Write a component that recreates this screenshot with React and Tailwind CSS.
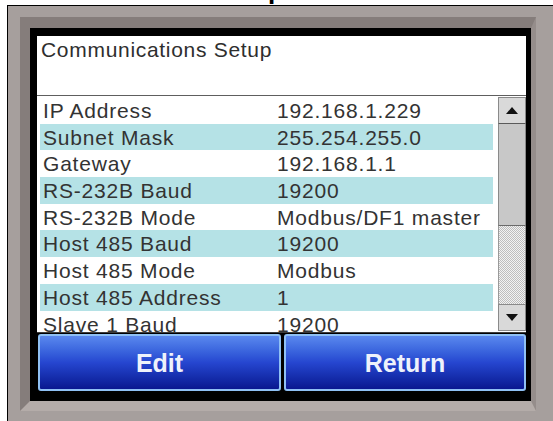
import React from 'react';

const rows = [
  ['IP Address', '192.168.1.229'],
  ['Subnet Mask', '255.254.255.0'],
  ['Gateway', '192.168.1.1'],
  ['RS-232B Baud', '19200'],
  ['RS-232B Mode', 'Modbus/DF1 master'],
  ['Host 485 Baud', '19200'],
  ['Host 485 Mode', 'Modbus'],
  ['Host 485 Address', '1'],
  ['Slave 1 Baud', '19200'],
];

const Arrow = ({ down }) => (
  <svg width="12" height="7" viewBox="0 0 12 7">
    <polygon points={down ? '0,0 12,0 6,7' : '0,7 12,7 6,0'} fill="#111" />
  </svg>
);

const ScrollBar = () => (
  <div className="w-[28px] flex flex-col pt-[1px] pb-[1px] bg-white">
    <div className="h-[27px] flex items-center justify-center bg-[#d9d9d9] border border-[#8a8a8a] border-b-[#5a5a5a]">
      <Arrow />
    </div>
    <div className="h-[102px] bg-[#c8c8c8] border-l border-r border-[#8a8a8a] border-b border-b-[#6a6a6a]" />
    <div className="flex-1 border-l border-r border-[#9a9a9a] bg-[image:repeating-conic-gradient(#bdbdbd_0_25%,#f2f2f2_0_50%)] bg-[length:2px_2px]" />
    <div className="h-[27px] flex items-center justify-center bg-[#d9d9d9] border border-[#8a8a8a]">
      <Arrow down />
    </div>
  </div>
);

const SetupList = () => (
  <div className="h-[236px] flex bg-white overflow-hidden">
    <div className="flex-1 pl-[3px] pr-[5px] pt-[1px]">
      {rows.map(([label, value], i) => (
        <div
          key={label}
          className={`h-[26.7px] flex pt-[2px] pl-[3px] leading-[24px] text-[21px] tracking-[0.8px] text-[#333] ${i % 2 ? 'bg-[#b5e2e6]' : 'bg-white'}`}
        >
          <span className="w-[234px] shrink-0">{label}</span>
          <span>{value}</span>
        </div>
      ))}
    </div>
    <ScrollBar />
  </div>
);

const PanelButton = ({ children, className = '' }) => (
  <button
    className={`h-full flex items-center justify-center pt-[3px] rounded-[3px] border-2 border-[#8fc0f4] bg-linear-to-b from-[#5a88ee] via-[#2646d0] to-[#0a1790] text-[25px] font-bold text-[#eef2fb] ${className}`}
  >
    {children}
  </button>
);

export default function App() {
  return (
    <div className="w-[553px] h-[421px] overflow-hidden bg-white font-['Liberation_Sans',Arial,sans-serif]">
      {/* tail of the page heading above the frame */}
      <div className="h-[5px] overflow-hidden pl-[268px]">
        <span className="block -mt-[23px] text-[26px] leading-[26px] font-bold text-black">p</span>
      </div>

      {/* bezel */}
      <div className="ml-[7px] w-[600px] border-t border-l border-black bg-[#a69f9d] pt-[11px] pl-[12px] pr-[20px] pb-[30px]">
        <div className="border-t-[11px] border-l-[10px] border-r-[5px] border-b-[10px] border-t-[#857d7b] border-l-[#857d7b] border-r-[#958d8b] border-b-[#b4aca9] w-[516px]">
          <div className="bg-black pt-[8px] pl-[7px] pr-[10px] pb-[10px]">
            <div className="w-[489px] flex flex-col">
              <div className="h-[60px] bg-white pt-[2px] pl-[4px] text-[21px] leading-[24px] tracking-[0.7px] text-[#2e2e2e] border-b border-[#5e5e5e]">
                Communications Setup
              </div>
              <SetupList />
              <div className="h-[59px] flex gap-[3px] pl-[1px] pt-[1px] bg-black border-t border-[#3c3c3c]">
                <PanelButton className="w-[243px]">Edit</PanelButton>
                <PanelButton className="flex-1">Return</PanelButton>
              </div>
            </div>
          </div>
        </div>
      </div>
    </div>
  );
}
